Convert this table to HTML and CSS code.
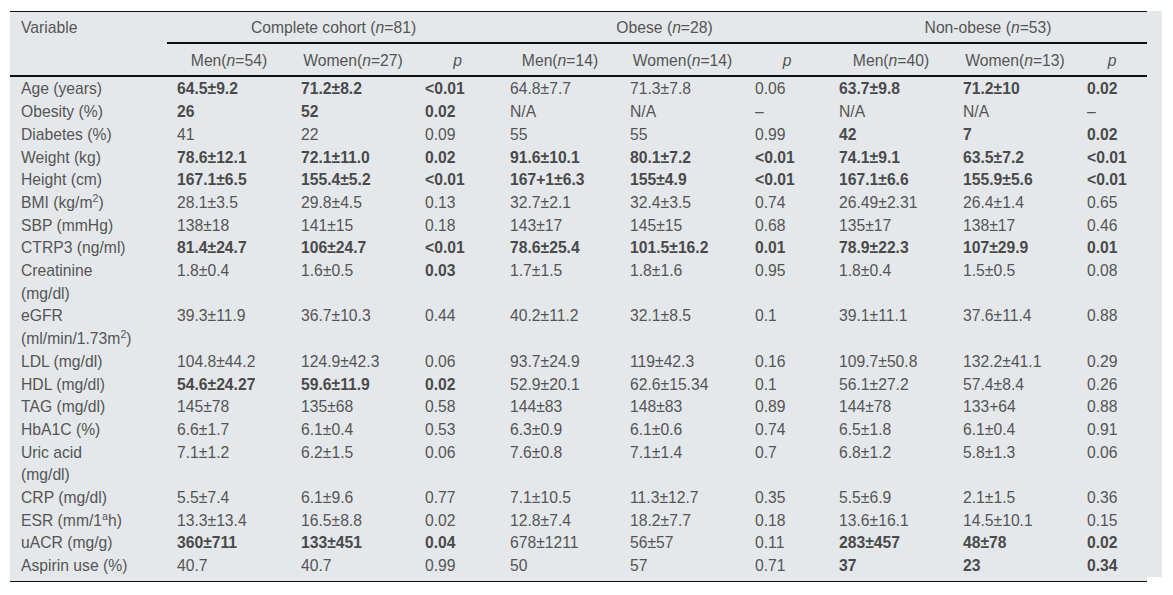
FILE: index.html
```html
<!DOCTYPE html>
<html>
<head>
<meta charset="utf-8">
<link rel="stylesheet" href="styles.css">
</head>
<body>
<div class="wrap">
<table class="data">
<colgroup>
<col class="c-var"><col class="c-a"><col class="c-a"><col class="c-p1">
<col class="c-b"><col class="c-c"><col class="c-p2">
<col class="c-a"><col class="c-a"><col class="c-p3">
</colgroup>
<thead>
<tr class="h1">
<th class="var" rowspan="2">Variable</th>
<th class="grp" colspan="3">Complete cohort (<i>n</i>=81)</th>
<th class="grp" colspan="3">Obese (<i>n</i>=28)</th>
<th class="grp" colspan="3">Non-obese (<i>n</i>=53)</th>
</tr>
<tr class="h2">
<th>Men(<i>n</i>=54)</th><th>Women(<i>n</i>=27)</th><th><i>p</i></th>
<th>Men(<i>n</i>=14)</th><th>Women(<i>n</i>=14)</th><th><i>p</i></th>
<th>Men(<i>n</i>=40)</th><th>Women(<i>n</i>=13)</th><th><i>p</i></th>
</tr>
</thead>
<tbody>
<tr><td>Age (years)</td><td><b>64.5±9.2</b></td><td><b>71.2±8.2</b></td><td><b>&lt;0.01</b></td><td>64.8±7.7</td><td>71.3±7.8</td><td>0.06</td><td><b>63.7±9.8</b></td><td><b>71.2±10</b></td><td><b>0.02</b></td></tr>
<tr><td>Obesity (%)</td><td><b>26</b></td><td><b>52</b></td><td><b>0.02</b></td><td>N/A</td><td>N/A</td><td>–</td><td>N/A</td><td>N/A</td><td>–</td></tr>
<tr><td>Diabetes (%)</td><td>41</td><td>22</td><td>0.09</td><td>55</td><td>55</td><td>0.99</td><td><b>42</b></td><td><b>7</b></td><td><b>0.02</b></td></tr>
<tr><td>Weight (kg)</td><td><b>78.6±12.1</b></td><td><b>72.1±11.0</b></td><td><b>0.02</b></td><td><b>91.6±10.1</b></td><td><b>80.1±7.2</b></td><td><b>&lt;0.01</b></td><td><b>74.1±9.1</b></td><td><b>63.5±7.2</b></td><td><b>&lt;0.01</b></td></tr>
<tr><td>Height (cm)</td><td><b>167.1±6.5</b></td><td><b>155.4±5.2</b></td><td><b>&lt;0.01</b></td><td><b>167+1±6.3</b></td><td><b>155±4.9</b></td><td><b>&lt;0.01</b></td><td><b>167.1±6.6</b></td><td><b>155.9±5.6</b></td><td><b>&lt;0.01</b></td></tr>
<tr><td>BMI (kg/m<sup>2</sup>)</td><td>28.1±3.5</td><td>29.8±4.5</td><td>0.13</td><td>32.7±2.1</td><td>32.4±3.5</td><td>0.74</td><td>26.49±2.31</td><td>26.4±1.4</td><td>0.65</td></tr>
<tr><td>SBP (mmHg)</td><td>138±18</td><td>141±15</td><td>0.18</td><td>143±17</td><td>145±15</td><td>0.68</td><td>135±17</td><td>138±17</td><td>0.46</td></tr>
<tr><td>CTRP3 (ng/ml)</td><td><b>81.4±24.7</b></td><td><b>106±24.7</b></td><td><b>&lt;0.01</b></td><td><b>78.6±25.4</b></td><td><b>101.5±16.2</b></td><td><b>0.01</b></td><td><b>78.9±22.3</b></td><td><b>107±29.9</b></td><td><b>0.01</b></td></tr>
<tr><td>Creatinine (mg/dl)</td><td>1.8±0.4</td><td>1.6±0.5</td><td><b>0.03</b></td><td>1.7±1.5</td><td>1.8±1.6</td><td>0.95</td><td>1.8±0.4</td><td>1.5±0.5</td><td>0.08</td></tr>
<tr><td>eGFR (ml/min/1.73m<sup>2</sup>)</td><td>39.3±11.9</td><td>36.7±10.3</td><td>0.44</td><td>40.2±11.2</td><td>32.1±8.5</td><td>0.1</td><td>39.1±11.1</td><td>37.6±11.4</td><td>0.88</td></tr>
<tr><td>LDL (mg/dl)</td><td>104.8±44.2</td><td>124.9±42.3</td><td>0.06</td><td>93.7±24.9</td><td>119±42.3</td><td>0.16</td><td>109.7±50.8</td><td>132.2±41.1</td><td>0.29</td></tr>
<tr><td>HDL (mg/dl)</td><td><b>54.6±24.27</b></td><td><b>59.6±11.9</b></td><td><b>0.02</b></td><td>52.9±20.1</td><td>62.6±15.34</td><td>0.1</td><td>56.1±27.2</td><td>57.4±8.4</td><td>0.26</td></tr>
<tr><td>TAG (mg/dl)</td><td>145±78</td><td>135±68</td><td>0.58</td><td>144±83</td><td>148±83</td><td>0.89</td><td>144±78</td><td>133+64</td><td>0.88</td></tr>
<tr><td>HbA1C (%)</td><td>6.6±1.7</td><td>6.1±0.4</td><td>0.53</td><td>6.3±0.9</td><td>6.1±0.6</td><td>0.74</td><td>6.5±1.8</td><td>6.1±0.4</td><td>0.91</td></tr>
<tr><td>Uric acid (mg/dl)</td><td>7.1±1.2</td><td>6.2±1.5</td><td>0.06</td><td>7.6±0.8</td><td>7.1±1.4</td><td>0.7</td><td>6.8±1.2</td><td>5.8±1.3</td><td>0.06</td></tr>
<tr><td>CRP (mg/dl)</td><td>5.5±7.4</td><td>6.1±9.6</td><td>0.77</td><td>7.1±10.5</td><td>11.3±12.7</td><td>0.35</td><td>5.5±6.9</td><td>2.1±1.5</td><td>0.36</td></tr>
<tr><td>ESR (mm/1<sup>a</sup>h)</td><td>13.3±13.4</td><td>16.5±8.8</td><td>0.02</td><td>12.8±7.4</td><td>18.2±7.7</td><td>0.18</td><td>13.6±16.1</td><td>14.5±10.1</td><td>0.15</td></tr>
<tr><td>uACR (mg/g)</td><td><b>360±711</b></td><td><b>133±451</b></td><td><b>0.04</b></td><td>678±1211</td><td>56±57</td><td>0.11</td><td><b>283±457</b></td><td><b>48±78</b></td><td><b>0.02</b></td></tr>
<tr><td>Aspirin use (%)</td><td>40.7</td><td>40.7</td><td>0.99</td><td>50</td><td>57</td><td>0.71</td><td><b>37</b></td><td><b>23</b></td><td><b>0.34</b></td></tr>
</tbody>
</table>
</div>
</body>
</html>
```

FILE: styles.css
```css
html, body {
  margin: 0;
  padding: 0;
  background: #ffffff;
}

.wrap {
  position: relative;
  margin: 11px 0 0 10px;
  width: 1152px;
  background: #e4e8eb;
}

.wrap::after {
  content: "";
  position: absolute;
  right: 0;
  bottom: 0;
  width: 15px;
  height: 5px;
  background: #ffffff;
}

.data {
  width: 1137px;
  table-layout: fixed;
  border-collapse: collapse;
  border-top: 1px solid #111;
  border-bottom: 1px solid #111;
  font-family: "Liberation Sans", Arial, sans-serif;
  font-size: 15.7px;
  line-height: 22.7px;
  color: #555;
}

.c-var { width: 157px; }
.c-a { width: 124px; }
.c-p1 { width: 85px; }
.c-b { width: 120px; }
.c-c { width: 125px; }
.c-p2 { width: 84px; }
.c-p3 { width: 70px; }

.data th {
  font-weight: normal;
  text-align: center;
  padding: 5px 10px 2px;
}

.data th.var {
  text-align: left;
  vertical-align: top;
  padding-left: 11px;
  border-bottom: 2px solid #111;
}

.data th.grp {
  border-bottom: 2px solid #111;
}

.h2 th {
  padding: 6px 10px 3px;
  border-bottom: 2px solid #111;
}

.data td {
  padding: 0 10px;
  vertical-align: top;
  text-align: left;
}

.data tbody tr:first-child td {
  padding-top: 1px;
}

.data tbody tr:last-child td {
  padding-bottom: 3px;
}

.data td:first-child {
  padding-left: 11px;
  padding-right: 33px;
}

.data b {
  font-weight: bold;
  color: #4a4a4a;
}

.data sup {
  font-size: 0.68em;
  line-height: 0;
  vertical-align: 0.55em;
}
```
